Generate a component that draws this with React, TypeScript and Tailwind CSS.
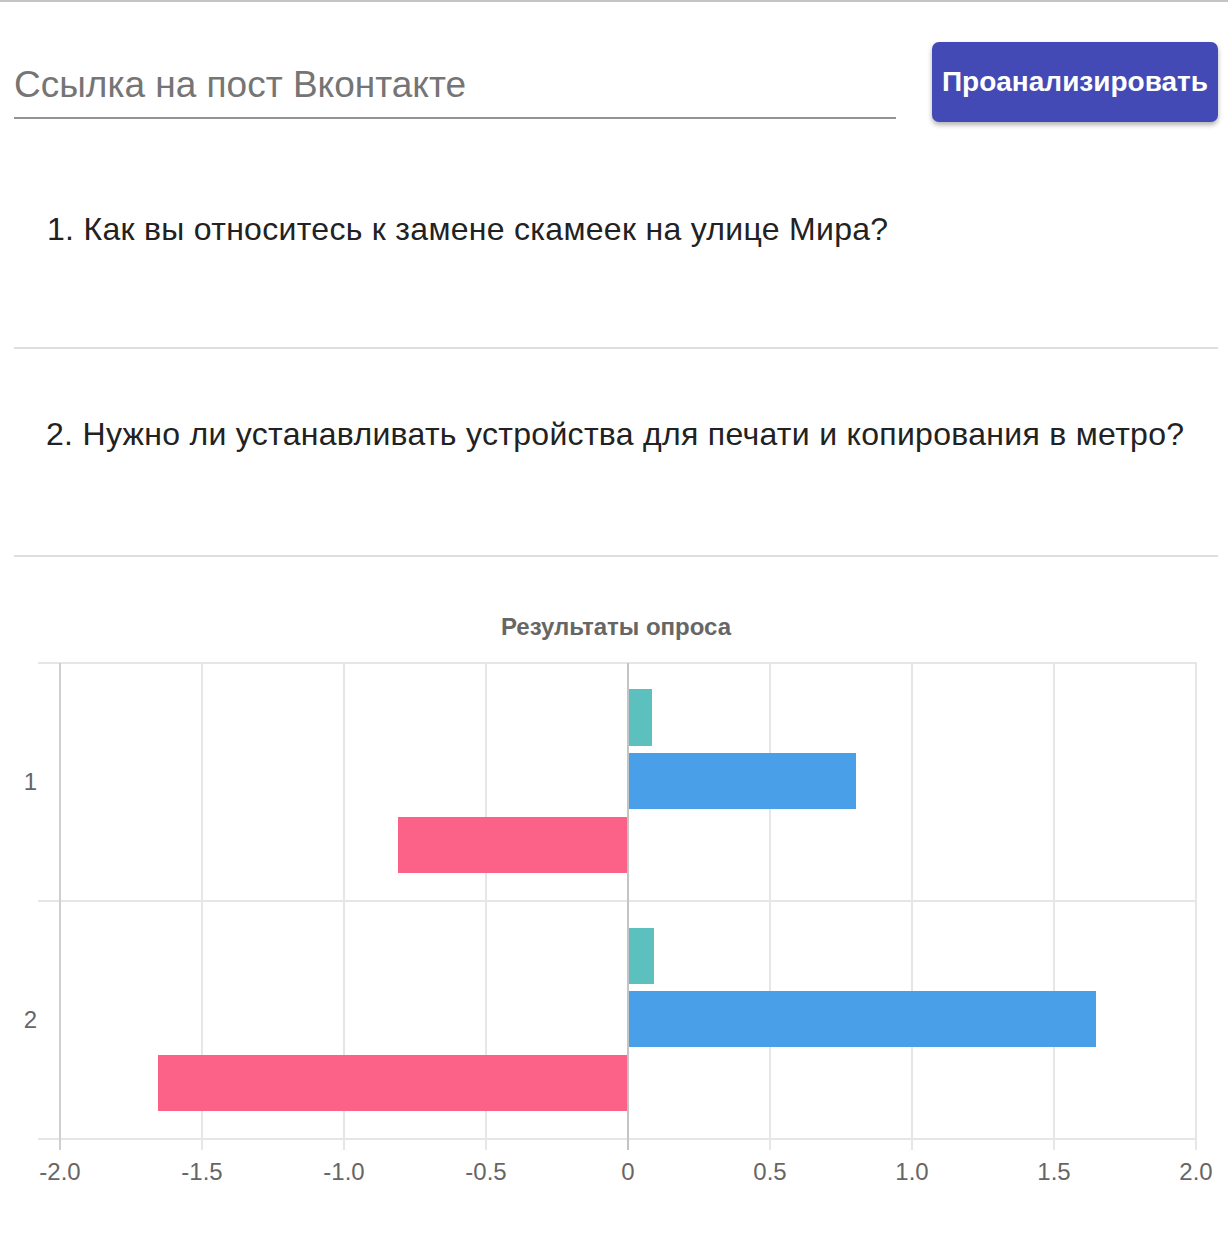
import React from "react";

const gridX = [60, 202, 344, 486, 628, 770, 912, 1054, 1196];
const xLabels = ["-2.0", "-1.5", "-1.0", "-0.5", "0", "0.5", "1.0", "1.5", "2.0"];

type Bar = { x: number; y: number; w: number; h: number; fill: string };
const bars: Bar[] = [
  { x: 628, y: 688, w: 24, h: 57, fill: "#5bc0be" },
  { x: 628, y: 752, w: 228, h: 56, fill: "#4aa0e8" },
  { x: 398, y: 816, w: 230, h: 56, fill: "#fc6287" },
  { x: 628, y: 927, w: 26, h: 56, fill: "#5bc0be" },
  { x: 628, y: 990, w: 468, h: 56, fill: "#4aa0e8" },
  { x: 158, y: 1054, w: 470, h: 56, fill: "#fc6287" },
];

function Chart() {
  return (
    <svg
      width={1228}
      height={690}
      viewBox="0 556 1228 690"
      className="block font-['Liberation_Sans',Arial,sans-serif]"
    >
      <text x={616} y={634} textAnchor="middle" fontSize={24} fontWeight={700} fill="#666">
        Результаты опроса
      </text>
      {[662, 900, 1138].map((y) => (
        <line key={y} x1={38} x2={1197} y1={y} y2={y} stroke="#e6e6e6" strokeWidth={2} />
      ))}
      {gridX.map((x, i) => (
        <line
          key={x}
          x1={x}
          x2={x}
          y1={662}
          y2={1149}
          stroke={i === 0 ? "#cfcfcf" : i === 4 ? "#c4c4c4" : "#e6e6e6"}
          strokeWidth={2}
        />
      ))}
      {bars.map((b, i) => (
        <rect key={i} x={b.x} y={b.y} width={b.w} height={b.h} fill={b.fill} />
      ))}
      <line x1={628} x2={628} y1={662} y2={1149} stroke="#c4c4c4" strokeWidth={2} />
      {gridX.map((x, i) => (
        <text key={x} x={x} y={1179} textAnchor="middle" fontSize={24} fill="#666">
          {xLabels[i]}
        </text>
      ))}
      <text x={37} y={789} textAnchor="end" fontSize={24} fill="#666">
        1
      </text>
      <text x={37} y={1027} textAnchor="end" fontSize={24} fill="#666">
        2
      </text>
    </svg>
  );
}

export default function App() {
  return (
    <div className="w-[1228px] min-h-[1246px] bg-white border-t-2 border-[#c4c4c4] font-['Liberation_Sans',Arial,sans-serif]">
      <div className="pl-[14px] pr-[10px]">
        <div className="flex items-start gap-[36px] mt-[40px]">
          <div className="w-[882px] border-b-2 border-[#949494]">
            <input
              className="w-full h-[75px] pt-[10px] text-[37px] text-[#222] placeholder:text-[#757575] outline-none bg-transparent"
              placeholder="Ссылка на пост Вконтакте"
            />
          </div>
          <button className="w-[286px] h-[80px] rounded-[7px] bg-[#444ab5] text-white text-[28px] font-bold shadow-[0_3px_5px_rgba(0,0,0,0.3)]">
            Проанализировать
          </button>
        </div>
        <div className="pt-[90px] pb-[100px] pl-[33px] text-[32px] leading-[35px] tracking-[0.3px] text-[#222]">
          1. Как вы относитесь к замене скамеек на улице Мира?
        </div>
        <div className="h-[2px] bg-[#dedede]" />
        <div className="pt-[68px] pb-[103px] pl-[32px] text-[32px] leading-[35px] tracking-[0.3px] text-[#222]">
          2. Нужно ли устанавливать устройства для печати и копирования в метро?
        </div>
        <div className="h-[2px] bg-[#dedede]" />
      </div>
      <Chart />
    </div>
  );
}
